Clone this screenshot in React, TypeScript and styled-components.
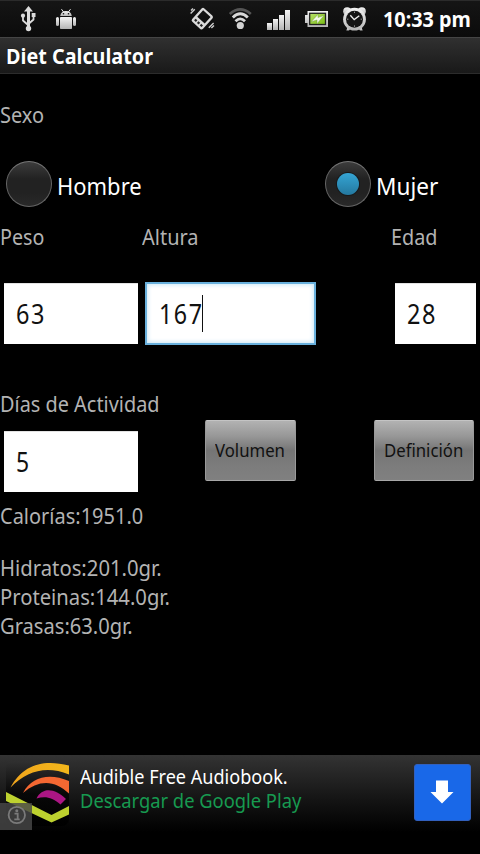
import React from 'react';
import styled, { createGlobalStyle, css } from 'styled-components';

const GlobalStyle = createGlobalStyle`
  *, *::before, *::after { box-sizing: border-box; }
  body { margin: 0; background: #000; font-family: "Noto Sans", sans-serif; }
`;

const Screen = styled.div`
  width: 480px;
  height: 854px;
  display: flex;
  flex-direction: column;
  background: #000;
  overflow: hidden;
`;

/* Slightly condensed text, anchored on its left edge. */
const Text = styled.span<{ $squeeze?: number }>`
  display: block;
  width: max-content;
  white-space: pre;
  transform: scaleX(${(p) => p.$squeeze ?? 0.93});
  transform-origin: 0 50%;
`;

const StatusBar = styled.header`
  height: 38px;
  flex: none;
  display: flex;
  align-items: flex-start;
  background: linear-gradient(#151515, #0b0b0b);
  border-top: 1px solid #2b2b2b;
  border-bottom: 1px solid #454545;
`;

const StatusIcons = styled.svg`
  display: block;
  flex: none;
  margin-top: -1px;
`;

const Clock = styled(Text)`
  color: #fff;
  font-size: 21px;
  font-weight: 700;
  line-height: 36px;
`;

const TitleBar = styled.div`
  height: 36px;
  flex: none;
  padding-left: 6.2px;
  background: linear-gradient(#303030, #191919);
  border-bottom: 1px solid #2c2c2c;
`;

const Title = styled(Text)`
  color: #fff;
  font-size: 21px;
  font-weight: 700;
  line-height: 37px;
  text-shadow: 0 0 1px #000;
`;

const Form = styled.main`
  flex: 1;
  display: flex;
  flex-direction: column;
  padding-top: 26px;
`;

const Label = styled(Text)`
  color: #b3b3b3;
  font-size: 21.5px;
  line-height: 29px;
`;

const RadioRow = styled.div`
  display: grid;
  grid-template-columns: 319px 1fr;
  margin-top: 32px;
  padding-left: 6px;
`;

const Radio = styled.label`
  display: flex;
  align-items: center;
  height: 46px;
  gap: 5px;
`;

const RadioDisc = styled.span<{ $checked?: boolean }>`
  width: 46px;
  height: 46px;
  display: flex;
  align-items: center;
  justify-content: center;
  border: 1.5px solid #666;
  border-top-color: #777;
  border-radius: 50%;
  background: linear-gradient(#3c3c3c, #222 38%, #222 70%, #292929);
  &::after {
    content: "";
    width: 22px;
    height: 22px;
    border-radius: 50%;
    ${(p) =>
      p.$checked &&
      css`
        background: linear-gradient(#35a5d4, #24789f);
        box-shadow: 0 0 0 1px #171a1c;
      `}
  }
`;

const RadioText = styled(Text)`
  color: #fff;
  font-size: 23.5px;
  line-height: 32px;
  margin-top: 3px;
`;

const LabelRow = styled.div`
  display: grid;
  grid-template-columns: 142px 249px 1fr;
  margin-top: 15px;
`;

const FieldRow = styled.div`
  display: grid;
  grid-template-columns: 134px 171px 81px;
  column-gap: 7px;
  align-items: center;
  margin: 31px 0 0 4px;

  & > :last-child { margin-left: 72px; width: 81px; }
`;

const Field = styled.div<{ $focused?: boolean }>`
  display: flex;
  align-items: center;
  width: ${(p) => (p.$focused ? 171 : 134)}px;
  height: ${(p) => (p.$focused ? 63 : 61)}px;
  padding-left: ${(p) => (p.$focused ? 11.6 : 12.3)}px;
  background: #fff;
  border-top: 1px solid #e2e2e2;
  ${(p) =>
    p.$focused &&
    css`
      border: 2px solid #69b0dc;
      box-shadow: inset 0 0 4px 1px #cbe8f7;
    `}
`;

const Value = styled(Text)`
  color: #111;
  font-size: 28px;
  line-height: 40px;
  margin-top: -2px;
  letter-spacing: 1.9px;
`;

const Caret = styled.span`
  width: 1px;
  height: 37px;
  margin-left: -10.8px;
  background: #111;
`;

const ActivityLabel = styled(Label)`
  margin-top: 44px;
`;

const ActivityRow = styled.div`
  display: grid;
  grid-template-columns: 201px 169px 100px;
  align-items: start;
  margin: 2px 0 0 4px;

  & > ${Field} { margin-top: 11px; }
`;

const Button = styled.button<{ $width: number }>`
  width: ${(p) => p.$width}px;
  height: 61px;
  padding: 0 0 2px 8.6px;
  border: 1px solid #999;
  border-top-color: #c4c4c4;
  border-bottom-color: #a8a8a8;
  border-radius: 2px;
  background: linear-gradient(#b2b2b2, #989898 25%, #757575 50%, #7c7c7c 75%, #808080);
  font-family: inherit;
  color: #111;
  font-size: 18px;
  line-height: 26px;
`;

const Results = styled.section`
  margin-top: 9px;
  & > :first-child { margin-bottom: 23px; }
`;

const Ad = styled.footer`
  height: 99px;
  flex: none;
  display: flex;
  align-items: flex-start;
  background: linear-gradient(#333, #222 25%, #111 50%, #000 78%);
`;

const AdLogo = styled.svg`
  display: block;
  flex: none;
`;

const AdCopy = styled.div`
  width: 334px;
  padding-top: 10px;
`;

const AdLine = styled(Text)<{ $green?: boolean }>`
  color: ${(p) => (p.$green ? '#179a50' : '#fff')};
  font-size: 19.5px;
  line-height: 24px;
`;

const Download = styled.button`
  width: 57px;
  height: 57px;
  margin-top: 9px;
  padding: 0 0 2px;
  display: flex;
  align-items: center;
  justify-content: center;
  border: 1px solid #3260bd;
  border-radius: 3px;
  background: #1968e8;
`;

function StatusGlyphs() {
  return (
    <StatusIcons width="382.8" height="37" viewBox="0 0 382.8 37">
      <defs>
        <linearGradient id="silver" x1="0" y1="0" x2="0" y2="1">
          <stop offset="0" stopColor="#f4f4f4" />
          <stop offset="1" stopColor="#b4b4b4" />
        </linearGradient>
        <linearGradient id="lime" x1="0" y1="0" x2="1" y2="1">
          <stop offset="0" stopColor="#b9e06a" />
          <stop offset="1" stopColor="#79bd12" />
        </linearGradient>
      </defs>

      {/* USB trident */}
      <g fill="#dcdcdc">
        <path d="M28.5 6 L33 11.5 H30 V27 H27 V11.5 H24 Z" />
        <circle cx="28.5" cy="28.5" r="2.7" />
        <path d="M28 25 L23 20.5 V16" fill="none" stroke="#dcdcdc" strokeWidth="1.8" />
        <path d="M29 23.5 L33.5 19.5 V16" fill="none" stroke="#dcdcdc" strokeWidth="1.8" />
        <circle cx="23" cy="15.7" r="2.1" />
        <rect x="31.7" y="13" width="3.8" height="4" />
      </g>

      {/* Android robot */}
      <g fill="url(#silver)">
        <path d="M60.2 16 a5.9 6 0 0 1 11.6 0 Z" />
        <path d="M61.5 9.2 L63.8 12.3 M70.5 9.2 L68.2 12.3" stroke="#eee" strokeWidth="1" />
        <rect x="60" y="17" width="12" height="12" rx="0.8" />
        <rect x="56" y="17" width="3" height="9" rx="1.5" />
        <rect x="73" y="17" width="3" height="9" rx="1.5" />
        <circle cx="63.5" cy="13.7" r="0.8" fill="#111" />
        <circle cx="68.5" cy="13.7" r="0.8" fill="#111" />
      </g>

      {/* Vibrating phone */}
      <g transform="rotate(42 202.3 18.7)">
        <path
          fillRule="evenodd"
          fill="#dadada"
          d="M197 9.7 h10.6 q2 0 2 2 v14 q0 2 -2 2 h-10.6 q-2 0 -2 -2 v-14 q0 -2 2 -2 Z M197.3 11.9 v8.8 h10 v-8.8 Z"
        />
        <path d="M197.3 24.3 h2.4 m1.4 0 h2.4 m1.4 0 h2.4" stroke="#222" strokeWidth="2.2" />
      </g>
      <path d="M190.6 13.6 L194.8 9.2 M191 10.6 L193 8.5 M208.8 27.8 L213.6 23 M211.4 28 L214 25.4" stroke="#ccc" strokeWidth="1.4" />

      {/* Wi-Fi */}
      <g fill="none" strokeWidth="2.8">
        <path d="M229.8 14 Q240.2 4.8 250.8 14" stroke="#555" />
        <path d="M232.8 17.5 Q240.2 10.2 247.8 17.5" stroke="#d8d8d8" />
        <path d="M235.5 21.3 Q240.2 16.5 245 21.3" stroke="#d8d8d8" />
        <circle cx="240.3" cy="25.5" r="3.6" fill="#d2d2d2" />
      </g>

      {/* Signal bars */}
      <g fill="url(#silver)">
        <rect x="267" y="23" width="5" height="7" />
        <rect x="273" y="19" width="5" height="11" />
        <rect x="279" y="15" width="5" height="15" />
        <rect x="285" y="10" width="5" height="20" />
      </g>

      {/* Battery */}
      <path d="M307.5 11 H328 V27 H307.5 V23 H305 V15 H307.5 Z" fill="url(#silver)" />
      <rect x="309.7" y="13.3" width="15.8" height="11.2" fill="url(#lime)" stroke="#222" strokeWidth="1.3" />
      <path d="M311.2 21.7 L318 14.4 V17.6 L324 15.4 L317 23.7 V20 Z" fill="#f2f7e8" stroke="#6d9a3c" strokeWidth=".4" />

      {/* Alarm clock */}
      <g fill="url(#silver)">
        <circle cx="347.2" cy="11.3" r="4" />
        <circle cx="361.8" cy="11.3" r="4" />
        <path d="M347.8 26.5 L346.3 30.5 H349 L351 28 M361.2 26.5 L362.7 30.5 H360 L358 28" />
        <circle cx="354.5" cy="19.2" r="11.4" />
        <circle cx="354.5" cy="19.2" r="8.5" fill="#151515" />
        <path d="M350.3 15.3 L354.2 19.6 L359.3 15.8" fill="none" stroke="#eee" strokeWidth="1.4" />
        <path d="M354.5 11.6 v1.4 M354.5 25.4 v1.4 M347 19.2 h1.4 M360.6 19.2 h1.4" stroke="#999" strokeWidth="1" />
      </g>
    </StatusIcons>
  );
}

function AdPicture() {
  return (
    <AdLogo width="79.8" height="80" viewBox="0 0 79.8 80">
      <defs>
        <linearGradient id="tile" x1="0" y1="0" x2="0" y2="1">
          <stop offset="0" stopColor="#303030" />
          <stop offset=".5" stopColor="#080808" />
          <stop offset="1" stopColor="#000" />
        </linearGradient>
        <linearGradient id="amber" x1="0" y1="0" x2="1" y2="0">
          <stop offset="0" stopColor="#f0a51c" />
          <stop offset="1" stopColor="#f3b71b" />
        </linearGradient>
      </defs>
      <rect x="6" y="6" width="63" height="65" rx="7" fill="url(#tile)" />
      <path d="M10.5 32.5 C23 9 44 4 69 10.5 V19.5 C46 10 27 16 10.5 32.5 Z" fill="url(#amber)" />
      <path d="M23 38 C32 21 50 18 69 26 V38.5 C55 25 39 24 23 38 Z" fill="#f46832" />
      <path d="M36.5 43.5 C42 32 55 33 66 44 L60.5 49.5 C52 42 45 41 36.5 43.5 Z" fill="#ac1684" />
      <path d="M6 37 L51.5 60 L69 51 V59.5 L51.5 67.5 L6 46 Z" fill="#bdd12f" />
      <rect x="0" y="48" width="32" height="27" fill="#484848" opacity=".82" />
      <circle cx="16.8" cy="60" r="8.2" fill="none" stroke="#7a7a7a" strokeWidth="1.8" />
      <circle cx="16.8" cy="55.8" r="1.5" fill="#7a7a7a" />
      <path d="M14.5 58.7 h3.2 v5.3 M14.3 64.3 h5.4" fill="none" stroke="#7a7a7a" strokeWidth="1.8" />
    </AdLogo>
  );
}

export default function App() {
  return (
    <Screen>
      <GlobalStyle />
      <StatusBar>
        <StatusGlyphs />
        <Clock $squeeze={0.943}>10:33 pm</Clock>
      </StatusBar>
      <TitleBar>
        <Title $squeeze={0.942}>Diet Calculator</Title>
      </TitleBar>
      <Form>
        <Label>Sexo</Label>
        <RadioRow>
          <Radio>
            <RadioDisc />
            <RadioText $squeeze={0.935}>Hombre</RadioText>
          </Radio>
          <Radio>
            <RadioDisc $checked />
            <RadioText $squeeze={0.96}>Mujer</RadioText>
          </Radio>
        </RadioRow>
        <LabelRow>
          <Label $squeeze={0.915}>Peso</Label>
          <Label>Altura</Label>
          <Label $squeeze={0.921}>Edad</Label>
        </LabelRow>
        <FieldRow>
          <Field>
            <Value $squeeze={0.84}>63</Value>
          </Field>
          <Field $focused>
            <Value $squeeze={0.83}>167</Value>
            <Caret />
          </Field>
          <Field>
            <Value $squeeze={0.84}>28</Value>
          </Field>
        </FieldRow>
        <ActivityLabel $squeeze={0.925}>Días de Actividad</ActivityLabel>
        <ActivityRow>
          <Field>
            <Value $squeeze={0.82}>5</Value>
          </Field>
          <Button $width={91}>
            <Text>Volumen</Text>
          </Button>
          <Button $width={100}>
            <Text>Definición</Text>
          </Button>
        </ActivityRow>
        <Results>
          <Label>Calorías:1951.0</Label>
          <Label $squeeze={0.943}>Hidratos:201.0gr.</Label>
          <Label $squeeze={0.94}>Proteinas:144.0gr.</Label>
          <Label $squeeze={0.936}>Grasas:63.0gr.</Label>
        </Results>
      </Form>
      <Ad>
        <AdPicture />
        <AdCopy>
          <AdLine $squeeze={0.927}>Audible Free Audiobook.</AdLine>
          <AdLine $green $squeeze={0.94}>Descargar de Google Play</AdLine>
        </AdCopy>
        <Download aria-label="Download">
          <svg width="24" height="24" viewBox="0 0 24 24">
            <path d="M6 0.5 H18 V12 H23.5 L12 23.5 L0.5 12 H6 Z" fill="#fff" />
          </svg>
        </Download>
      </Ad>
    </Screen>
  );
}
